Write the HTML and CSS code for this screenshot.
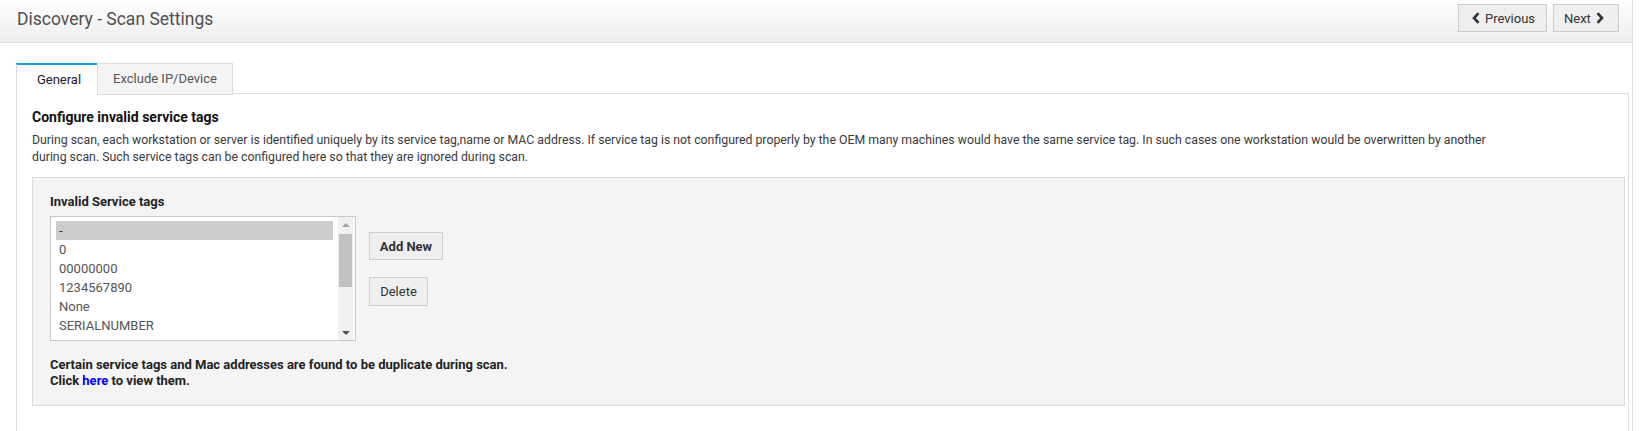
FILE: index.html
```html
<!DOCTYPE html>
<html lang="en">
<head>
<meta charset="utf-8">
<title>Discovery - Scan Settings</title>
<link rel="stylesheet" href="styles.css">
</head>
<body>
<div class="page">
  <header class="topbar">
    <h1 class="title">Discovery - Scan Settings</h1>
    <div class="nav">
      <button class="navbtn"><svg class="chev" viewBox="0 0 8 12" width="8" height="12"><path d="M6.5 1.2 L2 6 L6.5 10.8" fill="none" stroke="#333" stroke-width="2.6"/></svg>Previous</button>
      <button class="navbtn">Next<svg class="chev" viewBox="0 0 8 12" width="8" height="12"><path d="M1.5 1.2 L6 6 L1.5 10.8" fill="none" stroke="#333" stroke-width="2.6"/></svg></button>
    </div>
  </header>
  <main class="main">
    <div class="tabs">
      <div class="tab active">General</div>
      <div class="tab">Exclude IP/Device</div>
    </div>
    <div class="panel">
      <h2 class="heading">Configure invalid service tags</h2>
      <p class="desc">During scan, each workstation or server is identified uniquely by its service tag,name or MAC address. If service tag is not configured properly by the OEM many machines would have the same service tag. In such cases one workstation would be overwritten by another during scan. Such service tags can be configured here so that they are ignored during scan.</p>
      <div class="box">
        <div class="label">Invalid Service tags</div>
        <div class="row">
          <div class="listbox">
            <div class="items">
              <div class="item selected">-</div>
              <div class="item">0</div>
              <div class="item">00000000</div>
              <div class="item">1234567890</div>
              <div class="item">None</div>
              <div class="item">SERIALNUMBER</div>
            </div>
            <div class="scrollbar">
              <div class="arrow up"></div>
              <div class="track"><div class="thumb"></div></div>
              <div class="arrow down"></div>
            </div>
          </div>
          <div class="actions">
            <button class="btn bold">Add New</button>
            <button class="btn">Delete</button>
          </div>
        </div>
        <p class="note">Certain service tags and Mac addresses are found to be duplicate during scan.<br>Click <a href="#" class="link">here</a> to view them.</p>
      </div>
    </div>
  </main>
</div>
</body>
</html>
```

FILE: styles.css
```css
html, body {
  margin: 0;
  padding: 0;
  overflow: hidden;
  background: #fff;
}
body {
  font-family: Roboto, "Liberation Sans", Arial, sans-serif;
  color: #333;
}
.page {
  width: 1632px;
  height: 431px;
  border-right: 1px solid #dcdcdc;
  overflow: hidden;
}
.topbar {
  height: 42px;
  border-bottom: 1px solid #dcdcdc;
  background: linear-gradient(#ffffff, #eeeeee);
  display: flex;
  align-items: flex-start;
  justify-content: space-between;
}
.title {
  margin: 0;
  padding: 7px 0 0 17px;
  font-size: 17.5px;
  font-weight: 400;
  line-height: 24px;
  color: #505050;
}
.nav {
  display: flex;
  gap: 6px;
  padding: 4px 13px 0 0;
}
.navbtn {
  height: 28px;
  box-sizing: border-box;
  border: 1px solid #ccc;
  background: #efefef;
  font-family: inherit;
  font-size: 13px;
  color: #333;
  display: flex;
  align-items: center;
  gap: 5px;
  margin: 0;
}
.navbtn:first-child { width: 89px; padding: 0 10px 0 13px; }
.navbtn:last-child { width: 66px; padding: 0 10px 0 10px; }
.chev { display: block; }
.main {
  padding: 20px 3px 0 16px;
}
.tabs {
  display: flex;
  height: 31px;
  margin-bottom: -1px;
  position: relative;
  z-index: 1;
}
.tab {
  box-sizing: border-box;
  height: 32px;
  padding: 0;
  font-size: 13px;
  line-height: 30px;
  color: #555;
  background: #f5f5f5;
  border: 1px solid #dcdcdc;
  width: 136px;
  text-align: center;
  white-space: nowrap;
}
.tab.active {
  width: 81px;
  color: #222;
  background: #fff;
  border: none;
  border-top: 2px solid #1a9ad8;
  border-left: 1px solid #dcdcdc;
  border-bottom: 1px solid #fff;
  line-height: 30px;
  padding-left: 4px;
}
.panel {
  border: 1px solid #dcdcdc;
  border-bottom: none;
  padding: 13px 3px 40px 15px;
}
.heading {
  margin: 0;
  font-size: 14px;
  font-weight: 700;
  line-height: 20px;
  color: #111;
}
.desc {
  margin: 5px 120px 11px 0;
  font-size: 12.3px;
  line-height: 17px;
  color: #3a3a3a;
}
.box {
  border: 1px solid #dcdcdc;
  background: #f4f4f4;
  padding: 15px 18px 16px 17px;
}
.label {
  font-size: 13px;
  font-weight: 700;
  line-height: 17px;
  color: #222;
  margin-bottom: 6px;
}
.row {
  display: flex;
  align-items: flex-start;
  gap: 13px;
}
.listbox {
  width: 306px;
  height: 125px;
  box-sizing: border-box;
  border: 1px solid #c8c8c8;
  background: #fff;
  display: flex;
  overflow: hidden;
}
.items {
  flex: 1;
  padding: 4px 5px 0 5px;
  overflow: hidden;
}
.item {
  height: 19px;
  line-height: 19px;
  padding-left: 3px;
  font-size: 13px;
  color: #555;
  white-space: nowrap;
}
.item.selected {
  background: #cccccc;
  color: #333;
}
.scrollbar {
  width: 15px;
  margin-right: 2px;
  background: #f1f1f1;
  display: flex;
  flex-direction: column;
}
.arrow {
  height: 15px;
  display: flex;
  align-items: center;
  justify-content: center;
}
.arrow::before {
  content: "";
  width: 0;
  height: 0;
  border-left: 4px solid transparent;
  border-right: 4px solid transparent;
}
.arrow.up::before { border-bottom: 4px solid #a3a3a3; }
.arrow.down::before { border-top: 4px solid #505050; }
.track {
  flex: 1;
  padding: 2px 1px 0;
}
.thumb {
  height: 53px;
  background: #c1c1c1;
}
.actions {
  display: flex;
  flex-direction: column;
  align-items: flex-start;
  gap: 17px;
  padding-top: 16px;
}
.btn {
  height: 28px;
  box-sizing: border-box;
  border: 1px solid #cfcfcf;
  background: #efefef;
  font-family: inherit;
  font-size: 13px;
  color: #333;
  margin: 0;
}
.btn.bold { font-weight: 700; width: 74px; padding: 0; }
.btn:last-child { height: 29px; width: 59px; padding: 0; }
.note {
  margin: 16px 0 0;
  font-size: 13px;
  font-weight: 700;
  line-height: 16px;
  color: #222;
}
.link {
  color: #0000ee;
  text-decoration: none;
}
```
